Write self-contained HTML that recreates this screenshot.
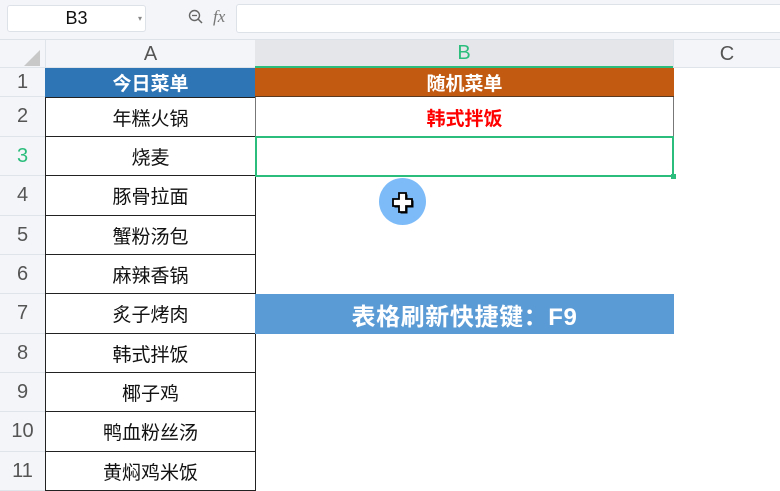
<!DOCTYPE html><html><head><meta charset="utf-8"><style>
*{margin:0;padding:0;box-sizing:border-box}
body{width:780px;height:490px;background:#fff;position:relative;overflow:hidden;font-family:"Liberation Sans","Noto Sans CJK SC",sans-serif}
.a{position:absolute}
.c{position:absolute;display:flex;align-items:center;justify-content:center}
.rh{position:absolute;left:0;width:45px;background:#f3f5f8;border-bottom:1px solid #dfe3ea;color:#555;font-size:20px;display:flex;align-items:center;justify-content:center}
.ca{position:absolute;left:45px;width:211px;border:1px solid #222;border-top:none;font-size:19px;color:#111;display:flex;align-items:center;justify-content:center}
</style></head><body>
<div class="a" style="left:0;top:0;width:780px;height:40px;background:#f3f5f8;border-bottom:1px solid #dde1e8"></div>
<div class="c" style="left:7px;top:5px;width:139px;height:27px;background:#fff;border:1px solid #dde1e8;border-radius:3px;font-size:18px;color:#111">B3</div>
<div class="a" style="left:138px;top:14px;font-size:8px;color:#888">▾</div>
<svg class="a" style="left:188px;top:9px" width="16" height="16" viewBox="0 0 16 16"><circle cx="6.5" cy="6.5" r="5" fill="none" stroke="#666" stroke-width="1.4"/><line x1="10" y1="10" x2="14" y2="14" stroke="#666" stroke-width="1.5"/><line x1="4" y1="6.5" x2="9" y2="6.5" stroke="#666" stroke-width="1.3"/></svg>
<div class="a" style="left:213px;top:7px;font-size:17px;font-style:italic;color:#777;font-family:'Liberation Serif',serif">fx</div>
<div class="a" style="left:236px;top:4px;width:550px;height:29px;background:#fff;border:1px solid #dde1e8;border-radius:3px"></div>
<div class="a" style="left:0;top:40px;width:780px;height:28px;background:#f3f5f8;border-bottom:1px solid #dfe3ea"></div>
<svg class="a" style="left:24px;top:50px" width="16" height="16"><polygon points="16,0 16,16 0,16" fill="#c8c8c8"/></svg>
<div class="c" style="left:45px;top:40px;width:210px;height:28px;font-size:20px;color:#555;border-left:1px solid #dfe3ea">A</div>
<div class="c" style="left:255px;top:40px;width:418px;height:28px;font-size:20px;color:#2bbd7c;background:#e4e6ea;border-bottom:2px solid #2bbd7c">B</div>
<div class="c" style="left:673px;top:40px;width:107px;height:28px;font-size:20px;color:#555;border-left:1px solid #dfe3ea">C</div>
<div class="rh" style="top:68px;height:29px">1</div>
<div class="rh" style="top:97px;height:40px">2</div>
<div class="rh" style="top:137px;height:39px;color:#2bbd7c">3</div>
<div class="rh" style="top:176px;height:40px">4</div>
<div class="rh" style="top:216px;height:39px">5</div>
<div class="rh" style="top:255px;height:39px">6</div>
<div class="rh" style="top:294px;height:40px">7</div>
<div class="rh" style="top:334px;height:39px">8</div>
<div class="rh" style="top:373px;height:39px">9</div>
<div class="rh" style="top:412px;height:40px">10</div>
<div class="rh" style="top:452px;height:39px">11</div>
<div class="ca" style="top:68px;height:29px;background:#2e75b6;color:#fff;font-weight:bold;border-color:#2e75b6">今日菜单</div>
<div class="ca" style="top:97px;height:40px;border-top:1px solid #222">年糕火锅</div>
<div class="ca" style="top:137px;height:39px">烧麦</div>
<div class="ca" style="top:176px;height:40px">豚骨拉面</div>
<div class="ca" style="top:216px;height:39px">蟹粉汤包</div>
<div class="ca" style="top:255px;height:39px">麻辣香锅</div>
<div class="ca" style="top:294px;height:40px">炙子烤肉</div>
<div class="ca" style="top:334px;height:39px">韩式拌饭</div>
<div class="ca" style="top:373px;height:39px">椰子鸡</div>
<div class="ca" style="top:412px;height:40px">鸭血粉丝汤</div>
<div class="ca" style="top:452px;height:39px">黄焖鸡米饭</div>
<div class="c" style="left:255px;top:68px;width:419px;height:29px;background:#c35a12;color:#fff;font-weight:bold;font-size:19px;border-bottom:1px solid #5a3a20">随机菜单</div>
<div class="c" style="left:255px;top:97px;width:419px;height:40px;color:#f00;font-weight:bold;font-size:19px;border-right:1px solid #777;border-left:1px solid #777">韩式拌饭</div>
<div class="a" style="left:255px;top:136px;width:419px;height:41px;border:2px solid #2bbd7c"></div>
<div class="a" style="left:671px;top:174px;width:5px;height:5px;background:#2bbd7c"></div>
<div class="c" style="left:255px;top:294px;width:419px;height:40px;background:#5b9bd5;color:#fff;font-weight:bold;font-size:24px;letter-spacing:0.6px">表格刷新快捷键：F9</div>
<div class="a" style="left:379px;top:178px;width:47px;height:47px;border-radius:50%;background:#7dbbf8"></div>
<svg class="a" style="left:390px;top:190px" width="26" height="26" viewBox="0 0 26 26"><path d="M9 3h7v6h6v7h-6v6H9v-6H3V9h6z" fill="#000" transform="translate(1.5,1.5)"/><path d="M9 3h7v6h6v7h-6v6H9v-6H3V9h6z" fill="#fff" stroke="#000" stroke-width="1.8"/></svg>
</body></html>
